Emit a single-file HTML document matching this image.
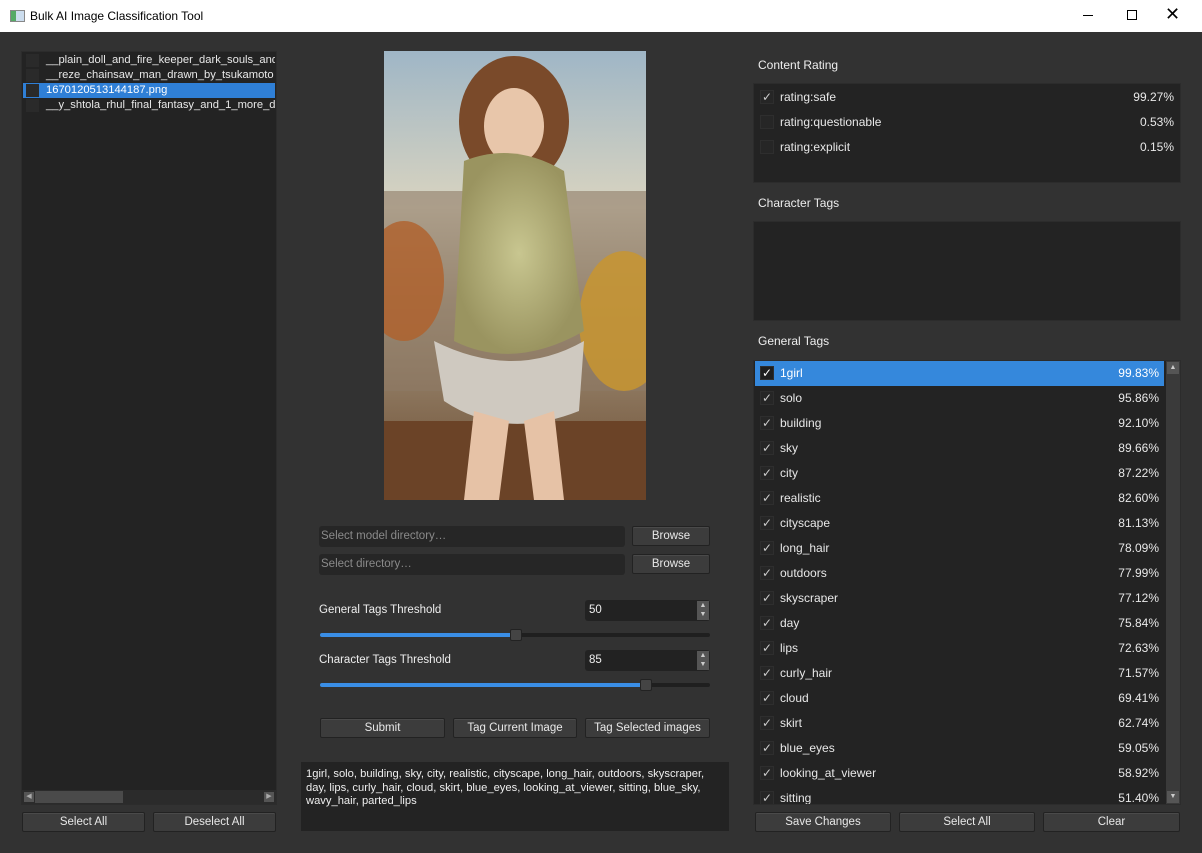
<!DOCTYPE html>
<html><head><meta charset="utf-8"><style>
*{box-sizing:border-box;margin:0;padding:0}
body{width:1202px;height:853px;background:#323232;font-family:"Liberation Sans",sans-serif;font-size:12px;color:#e8e8e8;position:relative;overflow:hidden}
.a{position:absolute}
.title{left:0;top:0;width:1202px;height:32px;background:#fff;color:#000;font-size:12px}
.panel{background:#232323;border:1px solid #2c2c2c}
.btn{background:#3c3c3c;border:1px solid #222;border-radius:2px;text-align:center;color:#e8e8e8;font-size:11.5px;line-height:18px;box-shadow:inset 0 1px 0 #4a4a4a}
.inp{background:#262626;border-radius:3px;color:#8a8a8a;font-size:11.5px;padding-left:2px;line-height:21px}
.lbl{font-size:12px;color:#eee}
.row{position:absolute;left:1px;right:1px;height:25px;line-height:25px;font-size:12px}
.cb{position:absolute;left:5px;top:5px;width:14px;height:14px;background:#262626;border:1px solid #2e2e2e;color:#ccc;font-size:12px;line-height:13px;text-align:center}
.row .t{position:absolute;left:25px}
.row .p{position:absolute;right:5px}
.li{position:absolute;left:1px;right:1px;height:15px;line-height:14px;font-size:11.2px;white-space:nowrap;overflow:hidden}
.li .c{display:inline-block;width:13px;height:13px;background:#2a2a2a;vertical-align:middle;margin:0 7px 0 3px}
</style></head><body>
<div class="a title">
 <div class="a" style="left:10px;top:10px;width:15px;height:12px;border:1px solid #888;background:linear-gradient(90deg,#5a6 0 40%,#cde 40%)"></div>
 <div class="a" style="left:30px;top:9px">Bulk AI Image Classification Tool</div>
 <div class="a" style="left:1083px;top:15px;width:10px;height:1px;background:#000"></div>
 <div class="a" style="left:1127px;top:10px;width:10px;height:10px;border:1px solid #000"></div>
 <div class="a" style="left:1165px;top:4px;font-size:18px">✕</div>
</div>

<div class="a panel" style="left:21px;top:51px;width:256px;height:754px">
 <div class="li" style="top:1px"><span class="c"></span>__plain_doll_and_fire_keeper_dark_souls_and</div>
 <div class="li" style="top:16px"><span class="c"></span>__reze_chainsaw_man_drawn_by_tsukamoto</div>
 <div class="li" style="top:31px;background:#2f7fd6;color:#fff"><span class="c"></span>1670120513144187.png</div>
 <div class="li" style="top:46px"><span class="c"></span>__y_shtola_rhul_final_fantasy_and_1_more_d</div>
 <div class="a" style="left:0;top:738px;width:254px;height:14px;background:#2b2b2b">
  <div class="a" style="left:2px;top:2px;width:10px;height:10px;background:#555;font-size:7px;color:#aaa;line-height:10px;text-align:center">◀</div>
  <div class="a" style="left:13px;top:1px;width:88px;height:12px;background:#4a4a4a"></div>
  <div class="a" style="left:242px;top:2px;width:10px;height:10px;background:#555;font-size:7px;color:#aaa;line-height:10px;text-align:center">▶</div>
 </div>
</div>
<div class="a btn" style="left:22px;top:812px;width:123px;height:20px">Select All</div>
<div class="a btn" style="left:153px;top:812px;width:123px;height:20px">Deselect All</div>

<svg class="a" style="left:384px;top:51px" width="262" height="449" viewBox="0 0 262 449">
 <defs>
  <linearGradient id="sky" x1="0" y1="0" x2="0" y2="1"><stop offset="0" stop-color="#9fb6c6"/><stop offset=".35" stop-color="#d9d4c0"/><stop offset=".55" stop-color="#a89a82"/><stop offset="1" stop-color="#6a4a30"/></linearGradient>
  <radialGradient id="dress" cx=".5" cy=".5" r=".5"><stop offset="0" stop-color="#c8c690"/><stop offset="1" stop-color="#9a9460"/></radialGradient>
 </defs>
 <rect width="262" height="449" fill="url(#sky)"/>
 <rect x="0" y="140" width="262" height="200" fill="#8d7a66" opacity=".6"/>
 <ellipse cx="20" cy="230" rx="40" ry="60" fill="#b0602a" opacity=".8"/>
 <ellipse cx="240" cy="270" rx="45" ry="70" fill="#c89530" opacity=".85"/>
 <rect x="0" y="370" width="262" height="79" fill="#6b4327"/>
 <ellipse cx="130" cy="70" rx="55" ry="65" fill="#7a4a2a"/>
 <ellipse cx="130" cy="75" rx="30" ry="38" fill="#e8c6aa"/>
 <path d="M80 110 Q130 90 180 120 L200 280 Q130 320 70 290 Z" fill="url(#dress)"/>
 <path d="M50 290 Q130 330 200 290 L195 360 Q120 390 60 350 Z" fill="#cfc9c0"/>
 <path d="M90 360 L80 449 L115 449 L125 370 Z M140 370 L150 449 L180 449 L170 360Z" fill="#e6c2a6"/>
</svg>

<div class="a inp" style="left:319px;top:526px;width:306px;height:21px">Select model directory…</div>
<div class="a btn" style="left:632px;top:526px;width:78px;height:20px">Browse</div>
<div class="a inp" style="left:319px;top:554px;width:306px;height:21px">Select directory…</div>
<div class="a btn" style="left:632px;top:554px;width:78px;height:20px">Browse</div>

<div class="a lbl" style="left:319px;top:604px;font-size:11.5px">General Tags Threshold</div>
<div class="a inp" style="left:585px;top:600px;width:125px;height:21px;color:#eee;padding-left:4px;background:#222">50</div>
<div class="a" style="left:697px;top:601px;width:12px;height:19px;background:#555;font-size:7px;color:#ccc;text-align:center;line-height:9px">▲<br>▼</div>
<div class="a" style="left:320px;top:633px;width:390px;height:4px;background:#1f1f1f;border-radius:2px"></div>
<div class="a" style="left:320px;top:633px;width:196px;height:4px;background:#3a8ee6;border-radius:2px"></div>
<div class="a" style="left:510px;top:629px;width:12px;height:12px;background:#444;border:1px solid #222;border-radius:2px"></div>

<div class="a lbl" style="left:319px;top:654px;font-size:11.5px">Character Tags Threshold</div>
<div class="a inp" style="left:585px;top:650px;width:125px;height:21px;color:#eee;padding-left:4px;background:#222">85</div>
<div class="a" style="left:697px;top:651px;width:12px;height:19px;background:#555;font-size:7px;color:#ccc;text-align:center;line-height:9px">▲<br>▼</div>
<div class="a" style="left:320px;top:683px;width:390px;height:4px;background:#1f1f1f;border-radius:2px"></div>
<div class="a" style="left:320px;top:683px;width:326px;height:4px;background:#3a8ee6;border-radius:2px"></div>
<div class="a" style="left:640px;top:679px;width:12px;height:12px;background:#444;border:1px solid #222;border-radius:2px"></div>

<div class="a btn" style="left:320px;top:718px;width:125px;height:20px">Submit</div>
<div class="a btn" style="left:453px;top:718px;width:124px;height:20px">Tag Current Image</div>
<div class="a btn" style="left:585px;top:718px;width:125px;height:20px">Tag Selected images</div>

<div class="a" style="left:301px;top:762px;width:428px;height:69px;background:#232323;padding:6px 5px;font-size:11.2px;line-height:13.5px;color:#eee">1girl, solo, building, sky, city, realistic, cityscape, long_hair, outdoors, skyscraper, day, lips, curly_hair, cloud, skirt, blue_eyes, looking_at_viewer, sitting, blue_sky, wavy_hair, parted_lips</div>

<div class="a lbl" style="left:758px;top:58px">Content Rating</div>
<div class="a panel" style="left:753px;top:83px;width:428px;height:100px">
 <div class="row" style="top:1px"><span class="cb">✓</span><span class="t">rating:safe</span><span class="p">99.27%</span></div>
 <div class="row" style="top:26px"><span class="cb"></span><span class="t">rating:questionable</span><span class="p">0.53%</span></div>
 <div class="row" style="top:51px"><span class="cb"></span><span class="t">rating:explicit</span><span class="p">0.15%</span></div>
</div>
<div class="a lbl" style="left:758px;top:196px">Character Tags</div>
<div class="a panel" style="left:753px;top:221px;width:428px;height:100px"></div>
<div class="a lbl" style="left:758px;top:334px">General Tags</div>
<div class="a panel" style="left:753px;top:360px;width:428px;height:445px;overflow:hidden">
 <div class="a" style="left:0;top:0;right:15px;bottom:0;overflow:hidden">
 <div class="row" style="top:0;background:#3588dc;color:#fff"><span class="cb" style="background:#1e1e1e;color:#fff">✓</span><span class="t">1girl</span><span class="p">99.83%</span></div>
 <div class="row" style="top:25px"><span class="cb">✓</span><span class="t">solo</span><span class="p">95.86%</span></div>
 <div class="row" style="top:50px"><span class="cb">✓</span><span class="t">building</span><span class="p">92.10%</span></div>
 <div class="row" style="top:75px"><span class="cb">✓</span><span class="t">sky</span><span class="p">89.66%</span></div>
 <div class="row" style="top:100px"><span class="cb">✓</span><span class="t">city</span><span class="p">87.22%</span></div>
 <div class="row" style="top:125px"><span class="cb">✓</span><span class="t">realistic</span><span class="p">82.60%</span></div>
 <div class="row" style="top:150px"><span class="cb">✓</span><span class="t">cityscape</span><span class="p">81.13%</span></div>
 <div class="row" style="top:175px"><span class="cb">✓</span><span class="t">long_hair</span><span class="p">78.09%</span></div>
 <div class="row" style="top:200px"><span class="cb">✓</span><span class="t">outdoors</span><span class="p">77.99%</span></div>
 <div class="row" style="top:225px"><span class="cb">✓</span><span class="t">skyscraper</span><span class="p">77.12%</span></div>
 <div class="row" style="top:250px"><span class="cb">✓</span><span class="t">day</span><span class="p">75.84%</span></div>
 <div class="row" style="top:275px"><span class="cb">✓</span><span class="t">lips</span><span class="p">72.63%</span></div>
 <div class="row" style="top:300px"><span class="cb">✓</span><span class="t">curly_hair</span><span class="p">71.57%</span></div>
 <div class="row" style="top:325px"><span class="cb">✓</span><span class="t">cloud</span><span class="p">69.41%</span></div>
 <div class="row" style="top:350px"><span class="cb">✓</span><span class="t">skirt</span><span class="p">62.74%</span></div>
 <div class="row" style="top:375px"><span class="cb">✓</span><span class="t">blue_eyes</span><span class="p">59.05%</span></div>
 <div class="row" style="top:400px"><span class="cb">✓</span><span class="t">looking_at_viewer</span><span class="p">58.92%</span></div>
 <div class="row" style="top:425px"><span class="cb">✓</span><span class="t">sitting</span><span class="p">51.40%</span></div>
 </div>
 <div class="a" style="right:0;top:0;width:14px;height:443px;background:#3a3a3a">
  <div class="a" style="left:1px;top:1px;width:12px;height:12px;background:#555;font-size:7px;color:#ccc;text-align:center;line-height:12px">▲</div>
  <div class="a" style="left:1px;bottom:1px;width:12px;height:12px;background:#555;font-size:7px;color:#ccc;text-align:center;line-height:12px">▼</div>
 </div>
</div>
<div class="a btn" style="left:755px;top:812px;width:136px;height:20px">Save Changes</div>
<div class="a btn" style="left:899px;top:812px;width:136px;height:20px">Select All</div>
<div class="a btn" style="left:1043px;top:812px;width:137px;height:20px">Clear</div>
</body></html>
